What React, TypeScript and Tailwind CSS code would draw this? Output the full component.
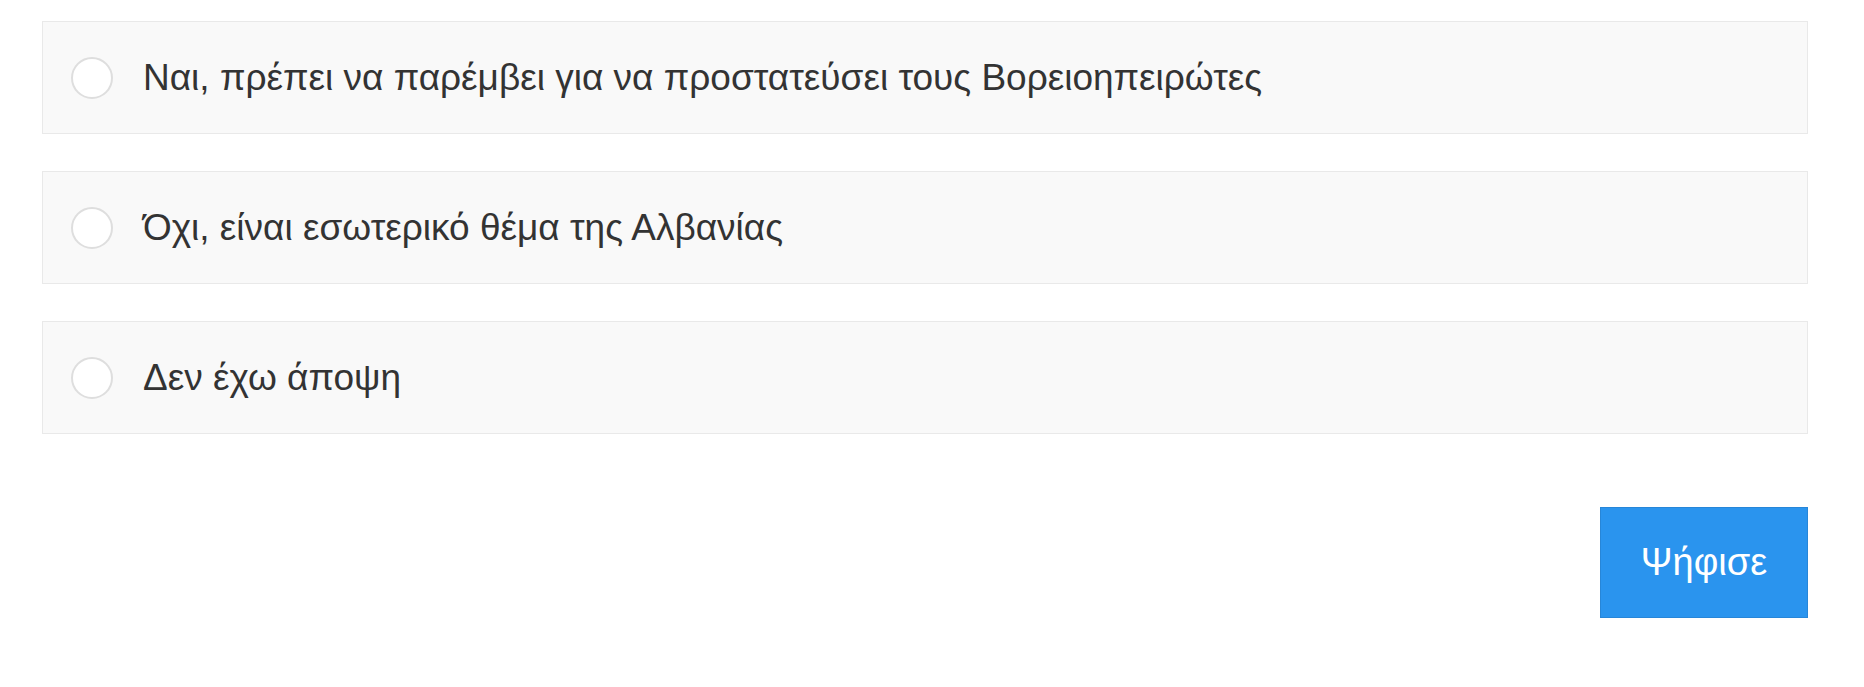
import React, { useState } from 'react';

const options = [
  'Ναι, πρέπει να παρέμβει για να προστατεύσει τους Βορειοηπειρώτες',
  'Όχι, είναι εσωτερικό θέμα της Αλβανίας',
  'Δεν έχω άποψη',
];

export default function App() {
  const [selected, setSelected] = useState<number | null>(null);

  return (
    <div className="bg-white min-h-[687px] pl-[42px] pt-[21px] pr-[56px] font-['Liberation_Sans',_'Noto_Sans',_sans-serif] text-[#333]">
      <div className="flex flex-col gap-[37px]">
        {options.map((opt, i) => (
          <label
            key={i}
            className="flex items-center h-[113px] bg-[#f9f9f9] border border-[#e9e9e9] pl-[28px] cursor-pointer"
          >
            <span
              className={`w-[42px] h-[42px] rounded-full border-2 bg-white shrink-0 ${selected === i ? 'border-[#2a93ec]' : 'border-[#dedede]'}`}
              onClick={() => setSelected(i)}
            />
            <span className="ml-[30px] text-[37px] leading-none">{opt}</span>
          </label>
        ))}
      </div>
      <div className="flex justify-end mt-[73px]">
        <button className="w-[208px] h-[111px] bg-[#2a94ee] border border-[#2786d8] text-white text-[38px]">
          Ψήφισε
        </button>
      </div>
    </div>
  );
}
